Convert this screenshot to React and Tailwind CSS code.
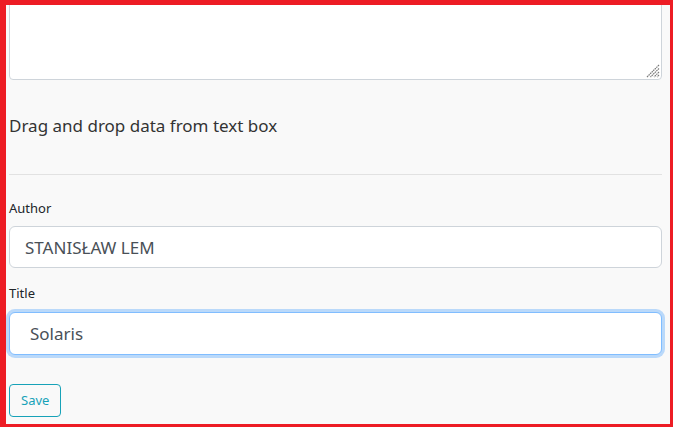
export default function App() {
  return (
    <div
      className="w-[673px] h-[427px] overflow-hidden bg-[#f9f9f9] border-t-[5px] border-l-[6px] border-r-[3px] border-b-[3px] border-[#ed1c24] box-border"
      style={{ fontFamily: '"Noto Sans", "Open Sans", sans-serif' }}
    >
      <div className="pl-[3px] pr-[8px] text-[#212529]">
        <div className="relative h-[75px] overflow-hidden">
          <textarea
            className="block w-full h-[95px] -mt-[20px] bg-white border border-[#ced4da] rounded-[4px] resize-none outline-none"
            readOnly
          />
          {/* resize grip */}
          <svg className="absolute right-[2px] bottom-[2px]" width="14" height="14" viewBox="0 0 14 14">
            <g stroke="#7a7a7a" strokeWidth="1.2" strokeDasharray="1.6 0.6">
              <line x1="13" y1="1" x2="1" y2="13" />
              <line x1="13" y1="4.5" x2="4.5" y2="13" />
              <line x1="13" y1="8" x2="8" y2="13" />
              <line x1="13" y1="11" x2="11" y2="13" />
            </g>
          </svg>
        </div>
        <p className="mt-[34px] text-[17px] leading-[24px] text-[#333]">
          Drag and drop data from text box
        </p>
        <hr className="mt-[36px] border-0 border-t border-[#e2e2e2]" />
        <form className="mt-[23px]" onSubmit={(e) => e.preventDefault()}>
          <label className="block text-[13px] leading-[20px] mb-[8px]">Author</label>
          <input
            defaultValue="STANISŁAW LEM"
            className="block w-full h-[42px] px-[15px] bg-white border border-[#ced4da] rounded-[6px] text-[17px] text-[#495057] outline-none"
          />
          <label className="block text-[13px] leading-[20px] mt-[15px] mb-[9px]">Title</label>
          <input
            autoFocus
            defaultValue="Solaris"
            className="block w-full h-[43px] px-[20px] bg-white border border-[#80bdff] rounded-[6px] text-[17px] text-[#495057] caret-[#212529] outline-none shadow-[0_0_0_3px_rgba(0,123,255,0.25)]"
          />
          <button
            type="submit"
            className="mt-[29px] h-[33px] px-[11px] border border-[#17a2b8] rounded-[4px] text-[13px] text-[#17a2b8] bg-transparent"
          >
            Save
          </button>
        </form>
      </div>
    </div>
  );
}
